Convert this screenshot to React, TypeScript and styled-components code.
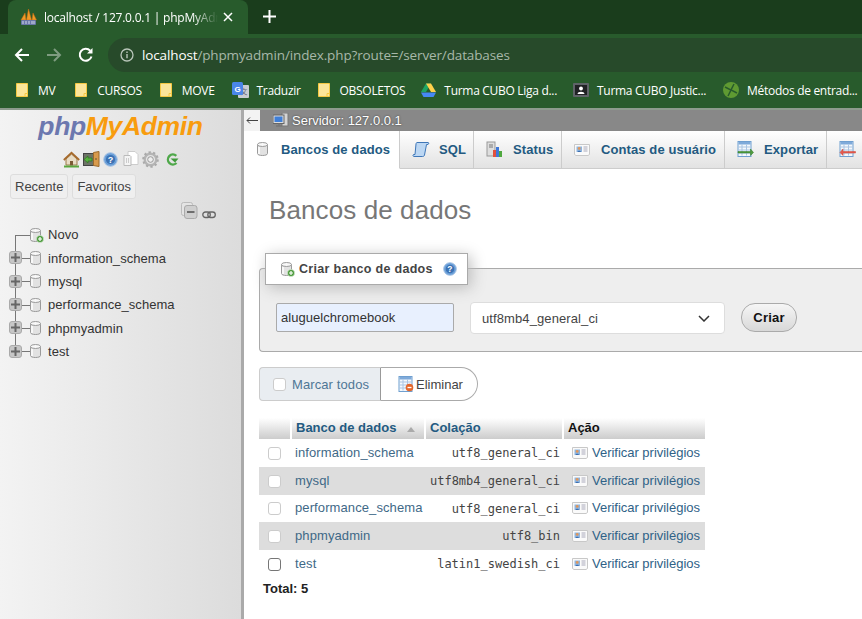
import React from 'react';
import styled, { createGlobalStyle } from 'styled-components';

const Global = createGlobalStyle`
  html, body { margin: 0; padding: 0; background: #fff; }
  body { font-family: "Liberation Sans", Arial, sans-serif; }
  * { box-sizing: border-box; }
`;

const Page = styled.div`
  width: 862px; height: 619px; overflow: hidden; display: flex; flex-direction: column; background: #fff;
`;
const TabStrip = styled.div`
  height: 34px; background: #1a3d1c; display: flex; align-items: flex-end; padding-left: 8px; flex: none;
`;
const BrowserTab = styled.div`
  width: 240px; height: 34px; background: #285b2c; border-radius: 8px 8px 0 0; display: flex; align-items: center; padding: 0 12px;
  color: #fff; font: 12px "Open Sans", sans-serif; position: relative;
`;
const TabTitle = styled.span`
  margin-left: 7px; width: 174px; white-space: nowrap; overflow: hidden; letter-spacing: -0.22px;
  -webkit-mask-image: linear-gradient(90deg, #000 85%, transparent 100%);
  mask-image: linear-gradient(90deg, #000 85%, transparent 100%);
`;
const NewTab = styled.div`
  margin-left: 14px; margin-bottom: 9px; width: 16px; height: 16px; display: flex;
`;
const Toolbar = styled.div`
  height: 38px; flex: none; background: #285b2c; display: flex; align-items: center; padding-left: 14px; padding-top: 4px;
`;
const NavIcons = styled.div`
  display: flex; gap: 16px; align-items: center; width: 94px; flex: none;
`;
const Omnibox = styled.div`
  flex: 1; height: 34px; background: #274a2a; border-radius: 17px 0 0 17px; display: flex; align-items: center; padding-left: 12px;
  font: 13.5px "Open Sans", sans-serif; color: #a8b8a9; letter-spacing: -0.13px;
`;
const Host = styled.span`color: #fff; margin-left: 8px;`;
const Bookmarks = styled.div`
  height: 36px; flex: none; background: #285b2c; display: flex; align-items: center; padding-left: 16px;
  font: 12px "Open Sans", sans-serif; color: #fff; white-space: nowrap;
`;
const Bookmark = styled.div<{ $gap?: number; $after?: number }>`
  display: flex; align-items: center; gap: ${(p) => p.$gap ?? 10}px; letter-spacing: -0.3px; margin-right: ${(p) => p.$after ?? 18}px;
`;
const Divider = styled.div`height: 2px; background: #8d9b8e; flex: none;`;
const Body = styled.div`flex: 1; display: flex; min-height: 0;`;

const Side = styled.aside`
  width: 241px; flex: none; background: linear-gradient(90deg, #f3f3f3, #dcdcdc); padding-top: 1px; color: #333;
`;
const Splitter = styled.div`width: 3px; flex: none; background: #aaa;`;
const Logo = styled.div`
  font: italic bold 26.5px "Liberation Sans", sans-serif; text-align: center; letter-spacing: -0.35px; height: 30px; line-height: 30px;
`;
const Php = styled.span`color: #6c78af;`;
const My = styled.span`color: #f89c0e;`;
const IconRow = styled.div`
  display: flex; align-items: center; margin: 9px 0 0 63px; height: 18px; gap: 3px;
`;
const NavTabs = styled.div`display: flex; gap: 4px; margin: 6px 0 0 10px;`;
const NavTab = styled.div`
  height: 25px; padding: 0 4px; line-height: 24px; font-size: 13px; color: #444; background: #efefef; border: 1px solid #ddd; border-radius: 3px;
`;
const TreeTools = styled.div`
  display: flex; align-items: flex-end; gap: 4px; margin: 3px 0 0 181px; height: 17px;
`;
const Tree = styled.ul`list-style: none; margin: 4px 0 0; padding: 0;`;
const TreeRow = styled.li<{ $first?: boolean; $last?: boolean }>`
  position: relative; height: 23.35px; display: flex; align-items: center; padding-left: 28px; font-size: 13px; color: #333; gap: 4px; letter-spacing: 0.05px;
  &::before {
    content: ""; position: absolute; left: 15px; width: 1px; background: #777;
    top: ${(p) => (p.$first ? '50%' : '0')}; bottom: ${(p) => (p.$last ? '50%' : '0')};
  }
  &::after {
    content: ""; position: absolute; left: 15px; width: 15px; height: 1px; top: 50%; background: #777;
  }
`;
const Expander = styled.span`
  position: absolute; left: 9px; top: 5px; width: 13px; height: 13px; border-radius: 3px; background: #c6c6c6; border: 1px solid #aaa; z-index: 1;
  color: #555; display: flex; align-items: center; justify-content: center;
`;
const Main = styled.main`flex: 1; min-width: 0; display: flex; flex-direction: column; background: #fff;`;
const ServerBar = styled.div`
  height: 21px; flex: none; background: #888; display: flex; align-items: center; color: #fff; font-size: 13px; text-shadow: 0 0 2px #333; letter-spacing: 0; padding-left: 0;
`;
const Collapse = styled.div`
  width: 16px; height: 21px; background: #f3f3f3; color: #333; display: flex; align-items: center; justify-content: center; margin-right: 13px; flex: none; text-shadow: none;
`;
const ServerIcon = styled.span`display: flex; margin-right: 3px;`;
const TopTabs = styled.nav`
  height: 38px; flex: none; display: flex; white-space: nowrap; overflow: hidden;
`;
const TopTab = styled.div<{ $active?: boolean; $w: number; $gap?: number; $pad?: number }>`
  width: ${(p) => p.$w}px; flex: none; display: flex; align-items: center; padding-left: ${(p) => p.$pad ?? 12}px; gap: ${(p) => p.$gap ?? 9}px;
  font: bold 13px "Liberation Sans", sans-serif; color: #235a81; letter-spacing: 0.1px; padding-bottom: 1px;
  border-right: 1px solid #ccc;
  background: ${(p) => (p.$active ? '#fff' : 'linear-gradient(#fff, #e2e2e2)')};
  border-bottom: 1px solid ${(p) => (p.$active ? '#fff' : '#ccc')};
`;
const Content = styled.div`flex: 1; padding: 0 0 0 15px; position: relative; min-height: 0;`;
const Heading = styled.h2`
  font: 400 26px "Liberation Sans", sans-serif; color: #777; margin: 26px 0 0 10px; height: 30px; line-height: 30px; letter-spacing: 0.1px;
`;
const Panel = styled.section`
  margin: 43px -5px 0 0; height: 84px; background: #eee; border: 1px solid #aaa; border-radius: 4px 0 0 4px; position: relative;
  border-right: 0; display: flex; align-items: flex-start; padding: 34px 0 0 16px;
`;
const Legend = styled.div`
  position: absolute; left: 5px; top: -16px; width: 203px; height: 32px; background: #fff; border: 1px solid #aaa; box-shadow: 3px 3px 15px #bbb;
  font: bold 12.5px "Liberation Sans", sans-serif; color: #444; display: flex; align-items: center; padding-left: 13px; gap: 4px; letter-spacing: 0.3px;
`;
const HelpSlot = styled.span`display: flex; margin-left: 6px;`;
const NameInput = styled.div`
  width: 178px; height: 29px; background: #e8f0fe; border: 1px solid #aaa; border-radius: 2px; font-size: 13px; color: #333; line-height: 27px; padding-left: 4px; letter-spacing: 0.05px;
`;
const SelectBox = styled.div`
  width: 255px; height: 32px; margin: -1px 0 0 16px; background: #fff; border: 1px solid #ddd; border-radius: 4px; font-size: 13px; color: #444;
  display: flex; align-items: center; justify-content: space-between; padding: 0 14px 0 11px; letter-spacing: 0.1px;
`;
const CreateButton = styled.button`
  width: 56px; height: 29px; margin-left: 16px; border: 1px solid #aaa; border-radius: 14px; background: linear-gradient(#f6f6f6, #d8d8d8); font: bold 13px "Liberation Sans", sans-serif; color: #111; padding: 0; letter-spacing: 0.2px;
`;
const ActionBar = styled.div`display: flex; margin-top: 15px; height: 34px; font-size: 13px;`;
const CheckAll = styled.div`
  width: 122px; background: #e9edf1; border: 1px solid #ccc; border-right: 1px solid #999; border-radius: 4px 0 0 4px; display: flex; align-items: center; padding-left: 13px; gap: 6px; color: #4f7796; letter-spacing: 0.1px; margin-left: 0;
`;
const DropButton = styled.div`
  width: 97px; background: #fff; border: 1px solid #aaa; border-left: 0; border-radius: 0 17px 17px 0; display: flex; align-items: center; padding-left: 17px; gap: 2px; color: #444;
`;
const Check = styled.span<{ $strong?: boolean }>`
  width: 13px; height: 13px; flex: none; display: block; background: #fff; border-radius: 3px; border: 1px solid ${(p) => (p.$strong ? '#767676' : '#ccc')};
`;
const DbTable = styled.table`
  border-collapse: collapse; table-layout: fixed; width: 446px; margin-top: 17px; font-size: 13px;
`;
const HeadCell = styled.th<{ $w: number; $dark?: boolean }>`
  width: ${(p) => p.$w}px; height: 21px; padding: 0 0 2px 4px; text-align: left; background: linear-gradient(#fff, #ccc); border-left: 2px solid #fff; font-weight: bold; letter-spacing: 0;
  color: ${(p) => (p.$dark ? '#111' : '#235a81')}; white-space: nowrap;
  &:first-child { border-left: 0; }
`;
const SortMark = styled.span`display: inline-block; margin-left: 11px; width: 0; height: 0; border: 4px solid transparent; border-top: 0; border-bottom: 5px solid #aaa; vertical-align: 0;`;
const Row = styled.tr<{ $odd?: boolean; $h: number }>`
  height: ${(p) => p.$h}px; background: ${(p) => (p.$odd ? '#ddd' : '#fff')};
`;
const CheckCell = styled.td`padding: 0 0 0 9px;`;
const NameCell = styled.td`padding: 0 0 2px 4px; color: #3f6987; letter-spacing: 0.1px; white-space: nowrap;`;
const CollationCell = styled.td`padding: 0 3px 0 0; text-align: right; font: 12px "DejaVu Sans Mono", "Liberation Mono", monospace; color: #444; white-space: nowrap;`;
const ActionCell = styled.td`padding: 0 0 2px 9px; color: #2f6287; white-space: nowrap; letter-spacing: -0.02px;`;
const ActionInner = styled.span`display: flex; align-items: center; gap: 4px;`;
const Total = styled.div`font-weight: bold; font-size: 13px; color: #222; margin: 3px 0 0 4px; line-height: 16px;`;

const Db = ({ add, remove }: { add?: boolean; remove?: boolean }) => (
  <svg width="16" height="16" viewBox="0 0 16 16" style={{ flex: 'none' }}>
    <path d="M2.5 3.5v9c0 1.3 2.3 2 5 2s5-.7 5-2v-9z" fill="#e2e2e2" stroke="#9a9a9a" />
    <ellipse cx="7.5" cy="3.5" rx="5" ry="2" fill="#f8f8f8" stroke="#9a9a9a" />
    <path d="M4 6v7" stroke="#fff" strokeWidth="1.5" />
    {add && <circle cx="12" cy="12" r="3.6" fill="#4c9a3c" stroke="#dfeedd" strokeWidth=".6" />}
    {add && <path d="M10 12h4M12 10v4" stroke="#fff" strokeWidth="1.2" />}
    {remove && <circle cx="12" cy="12" r="3.6" fill="#d8592a" />}
  </svg>
);
const Home = () => (
  <svg width="17" height="17" viewBox="0 0 17 17">
    <path d="M3 8v6h11V8L8.500 3z" fill="#e8dcc5" stroke="#9b7a4a" />
    <path d="M.8 9 8.500 1.800 16.200 9" fill="none" stroke="#a66a2c" strokeWidth="1.800" />
    <rect x="7" y="10" width="3" height="4.500" fill="#7b5a35" />
    <path d="M1 15.500h15" stroke="#5aa63e" strokeWidth="2" />
  </svg>
);
const ExitIcon = () => (
  <svg width="17" height="16" viewBox="0 0 17 16">
    <rect x=".5" y="2.500" width="10" height="12" fill="#6d7467" stroke="#444" />
    <path d="M10.500 1.500 16 .500v15l-5.500-1z" fill="#d89a4c" stroke="#9a6a2c" />
    <path d="M1 8.500 5 5v2h4v3H5v2z" fill="#57b03f" stroke="#2f7a20" strokeWidth=".7" />
    <rect x="12.500" y="7" width="1" height="2" fill="#653" />
  </svg>
);
const Help = ({ size = 15 }: { size?: number }) => (
  <svg width={size} height={size} viewBox="0 0 15 15">
    <circle cx="7.500" cy="7.500" r="6.800" fill="#6a9fd8" stroke="#a9c4e4" />
    <circle cx="7.500" cy="7.500" r="4.600" fill="#3c72b4" />
    <text x="7.500" y="10.600" textAnchor="middle" fontSize="9" fontWeight="bold" fill="#fff" fontFamily="Liberation Sans">?</text>
  </svg>
);
const Docs = () => (
  <svg width="16" height="16" viewBox="0 0 16 16" style={{ marginLeft: 2 }}>
    <path d="M5 .500h7l3 3v10H5z" fill="#fff" stroke="#ccc" />
    <path d="M1 4.500h6l1 1v9H1z" fill="#f4f4f4" stroke="#bbb" />
    <path d="M3.500 7v5M5.500 7v5" stroke="#ccc" />
  </svg>
);
const Gear = () => (
  <svg width="17" height="17" viewBox="0 0 17 17">
    <circle cx="8.500" cy="8.500" r="5.800" fill="none" stroke="#b5b5b5" strokeWidth="2.400" />
    <circle cx="8.500" cy="8.500" r="7.300" fill="none" stroke="#aaa" strokeWidth="2" strokeDasharray="2.300 2.300" />
    <circle cx="8.500" cy="8.500" r="2.800" fill="#eee" stroke="#999" />
  </svg>
);
const Reload = () => (
  <svg width="14" height="15" viewBox="0 0 14 15" style={{ marginLeft: 3 }}>
    <path d="M11.300 3.800A5 5 0 1 0 11.500 11" fill="none" stroke="#4fa84a" strokeWidth="2.400" />
    <path d="M5.500 6.500h8L10 10.500z" fill="#3f9a3b" />
  </svg>
);
const CollapseAll = () => (
  <svg width="17" height="17" viewBox="0 0 17 17">
    <rect x=".5" y=".5" width="11" height="13" rx="2" fill="#e4e4e4" stroke="#bbb" />
    <rect x="3.500" y="3.500" width="12.500" height="13" rx="2.500" fill="#cfcfcf" stroke="#aaa" />
    <path d="M6 10h7.500" stroke="#555" strokeWidth="1.600" />
  </svg>
);
const LinkIcon = () => (
  <svg width="14" height="8" viewBox="0 0 14 8">
    <rect x=".8" y="1" width="7.500" height="5.500" rx="2.700" fill="none" stroke="#666" strokeWidth="1.300" />
    <rect x="5.800" y="1" width="7.500" height="5.500" rx="2.700" fill="none" stroke="#666" strokeWidth="1.300" />
  </svg>
);
const SqlIcon = () => (
  <svg width="18" height="17" viewBox="0 0 18 17" style={{ flex: 'none' }}>
    <path d="M5 1.500h11c1 0 1 1.500 0 2h-1.500L12.500 14c-.3 1.200-1 1.500-2 1.500H2c-1 0-1.500-1.500-.5-2h1.500L4 3c.2-1 .5-1.500 1-1.500z" fill="#bcd7f3" stroke="#3f77b8" />
  </svg>
);
const StatusIcon = () => (
  <svg width="16" height="17" viewBox="0 0 16 17" style={{ flex: 'none' }}>
    <rect x="1" y="1" width="8" height="14" fill="#dedede" stroke="#999" />
    <path d="M3 4h4M3 6h4" stroke="#777" />
    <rect x="7" y="9" width="3" height="7" fill="#e2513f" />
    <rect x="10" y="6" width="3" height="10" fill="#3f78d8" />
    <rect x="13" y="10" width="3" height="6" fill="#4fa83f" />
  </svg>
);
const UserCard = () => (
  <svg width="16" height="13" viewBox="0 0 16 13" style={{ flex: 'none' }}>
    <path d="M.5 1.500h15v10l-1.500 1H2l-1.500-1z" fill="#fafafa" stroke="#c8c8c8" />
    <rect x="2.500" y="3.500" width="5.500" height="5.500" fill="#8fb5de" />
    <circle cx="5.200" cy="5.400" r="1.400" fill="#e0965a" />
    <path d="M3.500 9c.3-1.600 3.100-1.600 3.500 0z" fill="#3d6fb0" />
    <path d="M9.500 4h4M9.500 6h4M9.500 8h4" stroke="#aab" />
  </svg>
);
const SheetBase = () => (
  <>
    <rect x="1" y=".5" width="13" height="15" fill="#f4f8fc" stroke="#6f9fd0" />
    <rect x="1.500" y="1" width="12" height="2.500" fill="#7faada" />
    <path d="M1.500 6h12M1.500 9h12M1.500 12h12M5 3.500v11M9.500 3.500v11" stroke="#aac4e2" />
  </>
);
const ExportIcon = () => (
  <svg width="17" height="16" viewBox="0 0 17 16" style={{ flex: 'none' }}>
    <SheetBase />
    <path d="M1 10.500h12.500V8l3 3.500-3 3V12H1z" fill="#4f9a3f" stroke="#2f7a20" strokeWidth=".5" />
  </svg>
);
const ImportIcon = () => (
  <svg width="17" height="16" viewBox="0 0 17 16" style={{ flex: 'none' }}>
    <SheetBase />
    <path d="M16.500 10.500H4V8l-3 3.500 3 3V12h12.500z" fill="#e65a50" stroke="#c43" strokeWidth=".5" />
  </svg>
);
const DeleteIcon = () => (
  <svg width="16" height="16" viewBox="0 0 16 16" style={{ flex: 'none' }}>
    <SheetBase />
    <circle cx="11.500" cy="11.500" r="3.800" fill="#e4672b" />
    <path d="M9.500 11.500h4" stroke="#fff" strokeWidth="1.300" />
  </svg>
);
const Folder = () => (
  <svg width="12" height="14" viewBox="0 0 12 14" style={{ flex: 'none' }}>
    <path d="M.5.500h8.500l2.500 0v13H.5z" fill="#fbe59a" stroke="#f5c842" />
    <path d="M9 13.500v-3h2.500" fill="none" stroke="#f5c842" />
  </svg>
);
const Translate = () => (
  <svg width="17" height="16" viewBox="0 0 17 16" style={{ flex: 'none' }}>
    <rect x="6" y="3" width="11" height="13" rx="1" fill="#c9ccd2" />
    <text x="11.500" y="12" fontSize="7" textAnchor="middle" fill="#667" fontFamily="Noto Sans CJK SC">文</text>
    <rect x="0" y="0" width="11" height="13" rx="1.500" fill="#4a86e8" />
    <text x="5.500" y="9.500" fontSize="8" fontWeight="bold" textAnchor="middle" fill="#fff" fontFamily="Liberation Sans">G</text>
  </svg>
);
const Drive = () => (
  <svg width="15" height="14" viewBox="0 0 15 14" style={{ flex: 'none' }}>
    <path d="M5 .5h5l-5 8.500H0z" fill="#1fa463" />
    <path d="M5 .500h5l5 8.500h-5z" fill="#ffd04b" />
    <path d="M0 9.500h15L12.500 14h-10z" fill="#4688f4" />
  </svg>
);
const Classroom = () => (
  <svg width="16" height="14" viewBox="0 0 16 14" style={{ flex: 'none' }}>
    <rect x="0" y="0" width="16" height="14" rx="1" fill="#5f6368" />
    <rect x="2" y="2" width="12" height="10" fill="#202124" />
    <circle cx="8" cy="5.500" r="1.900" fill="#fff" />
    <path d="M4.500 11c.2-3 6.800-3 7 0z" fill="#fff" />
  </svg>
);
const Methods = () => (
  <svg width="16" height="16" viewBox="0 0 16 16" style={{ flex: 'none' }}>
    <circle cx="8" cy="8" r="8" fill="#5f9a32" />
    <path d="M2 5 8 8 5 14M11 2 8 8l6 3" fill="none" stroke="#285b2c" strokeWidth="1.500" />
  </svg>
);
const Favicon = () => (
  <svg width="17" height="17" viewBox="0 0 17 17" style={{ flex: 'none' }}>
    <path d="M1 11 5 4l1 7zM6.500 11 8.500 0l3 11zM12 11l1-7 3.500 7z" fill="#ef9a28" stroke="#c96b10" strokeWidth=".5" />
    <rect x="1" y="11" width="15" height="5" rx="1" fill="#6a78a8" />
    <path d="M3 12v3M6 12v3M9 12v3M12 12v3M14 12v3" stroke="#dfe3f0" strokeWidth=".9" />
  </svg>
);
const ServerPc = () => (
  <svg width="16" height="15" viewBox="0 0 16 15">
    <rect x="9" y="0" width="6" height="13" fill="#d4d4d4" stroke="#777" />
    <rect x="0" y="2" width="11" height="8.500" fill="#dcdcdc" stroke="#666" />
    <rect x="1.500" y="3.500" width="8" height="5.500" fill="#3f7fd8" />
    <path d="M3 13h6M6 10.500V13" stroke="#777" strokeWidth="1.500" />
  </svg>
);

const databases = [
  ['information_schema', 'utf8_general_ci', 28],
  ['mysql', 'utf8mb4_general_ci', 28],
  ['performance_schema', 'utf8_general_ci', 27],
  ['phpmyadmin', 'utf8_bin', 28],
  ['test', 'latin1_swedish_ci', 28],
] as const;

export default function App() {
  return (
    <Page>
      <Global />
      <TabStrip>
        <BrowserTab>
          <Favicon />
          <TabTitle>localhost / 127.0.0.1 | phpMyAdmin</TabTitle>
          <svg width="10" height="10" viewBox="0 0 10 10" style={{ marginLeft: 5, flex: 'none' }}>
            <path d="M1 1l8 8M9 1l-8 8" stroke="#fff" strokeWidth="1.500" />
          </svg>
        </BrowserTab>
        <NewTab>
          <svg width="13" height="13" viewBox="0 0 13 13" style={{ margin: '1px 0 0 1px' }}>
            <path d="M6.500 0v13M0 6.500h13" stroke="#fff" strokeWidth="2" />
          </svg>
        </NewTab>
      </TabStrip>
      <Toolbar>
        <NavIcons>
          <svg width="16" height="16" viewBox="0 0 16 16"><path d="M15 8H2M8 2 2 8l6 6" fill="none" stroke="#fff" strokeWidth="2" /></svg>
          <svg width="16" height="16" viewBox="0 0 16 16"><path d="M1 8h13M8 2l6 6-6 6" fill="none" stroke="#7f9c81" strokeWidth="2" /></svg>
          <svg width="16" height="16" viewBox="0 0 16 16"><path d="M13.500 9.500A6 6 0 1 1 12.200 3.700" fill="none" stroke="#fff" strokeWidth="2" /><path d="M14.500 1v5.500H9z" fill="#fff" /></svg>
        </NavIcons>
        <Omnibox>
          <svg width="14" height="14" viewBox="0 0 14 14" style={{ flex: 'none' }}>
            <circle cx="7" cy="7" r="6" fill="none" stroke="#b9c6ba" strokeWidth="1.300" />
            <path d="M7 6v4.300M7 3.500v1.500" stroke="#b9c6ba" strokeWidth="1.400" />
          </svg>
          <Host>localhost</Host>/phpmyadmin/index.php?route=/server/databases
        </Omnibox>
      </Toolbar>
      <Bookmarks>
        <Bookmark $after={20}><Folder />MV</Bookmark>
        <Bookmark $after={18}><Folder />CURSOS</Bookmark>
        <Bookmark $after={17}><Folder />MOVE</Bookmark>
        <Bookmark $gap={8} $after={17}><Translate />Traduzir</Bookmark>
        <Bookmark $after={16}><Folder />OBSOLETOS</Bookmark>
        <Bookmark $gap={8} $after={16}><Drive />Turma CUBO Liga d...</Bookmark>
        <Bookmark $gap={8} $after={17}><Classroom />Turma CUBO Justic...</Bookmark>
        <Bookmark $gap={8} $after={0}><Methods />Métodos de entrad...</Bookmark>
      </Bookmarks>
      <Divider />
      <Body>
        <Side>
          <Logo><Php>php</Php><My>MyAdmin</My></Logo>
          <IconRow><Home /><ExitIcon /><Help /><Docs /><Gear /><Reload /></IconRow>
          <NavTabs><NavTab>Recente</NavTab><NavTab>Favoritos</NavTab></NavTabs>
          <TreeTools><CollapseAll /><LinkIcon /></TreeTools>
          <Tree>
            <TreeRow $first><Db add />Novo</TreeRow>
            {databases.map(([name], i) => (
              <TreeRow key={name} $last={i === databases.length - 1}>
                <Expander>
                  <svg width="9" height="9" viewBox="0 0 9 9"><path d="M0 4.500h9M4.500 0v9" stroke="#666" strokeWidth="2" /></svg>
                </Expander>
                <Db />{name}
              </TreeRow>
            ))}
          </Tree>
        </Side>
        <Splitter />
        <Main>
          <ServerBar>
            <Collapse>
              <svg width="12" height="7" viewBox="0 0 12 7"><path d="M12 3.500H1M4 .5l-3 3 3 3" fill="none" stroke="#444" /></svg>
            </Collapse>
            <ServerIcon><ServerPc /></ServerIcon>
            Servidor: 127.0.0.1
          </ServerBar>
          <TopTabs>
            <TopTab $active $w={156} $gap={10} $pad={11}><Db />Bancos de dados</TopTab>
            <TopTab $w={74}><SqlIcon />SQL</TopTab>
            <TopTab $w={88} $gap={11}><StatusIcon />Status</TopTab>
            <TopTab $w={163} $gap={11}><UserCard />Contas de usuário</TopTab>
            <TopTab $w={102} $gap={10}><ExportIcon /><span>Exportar</span></TopTab>
            <TopTab $w={40}><ImportIcon /></TopTab>
          </TopTabs>
          <Content>
            <Heading>Bancos de dados</Heading>
            <Panel>
              <Legend><Db add />Criar banco de dados<HelpSlot><Help size={14} /></HelpSlot></Legend>
              <NameInput>aluguelchromebook</NameInput>
              <SelectBox>
                utf8mb4_general_ci
                <svg width="12" height="7" viewBox="0 0 12 7"><path d="M1 1l5 5 5-5" fill="none" stroke="#333" strokeWidth="1.500" /></svg>
              </SelectBox>
              <CreateButton>Criar</CreateButton>
            </Panel>
            <ActionBar>
              <CheckAll><Check />Marcar todos</CheckAll>
              <DropButton><DeleteIcon />Eliminar</DropButton>
            </ActionBar>
            <DbTable>
              <thead>
                <tr>
                  <HeadCell $w={32} />
                  <HeadCell $w={134}>Banco de dados<SortMark /></HeadCell>
                  <HeadCell $w={138}>Colação</HeadCell>
                  <HeadCell $w={142} $dark>Ação</HeadCell>
                </tr>
              </thead>
              <tbody>
                {databases.map(([name, collation, h], i) => (
                  <Row key={name} $odd={i % 2 === 1} $h={h}>
                    <CheckCell><Check $strong={name === 'test'} /></CheckCell>
                    <NameCell>{name}</NameCell>
                    <CollationCell>{collation}</CollationCell>
                    <ActionCell><ActionInner><UserCard />Verificar privilégios</ActionInner></ActionCell>
                  </Row>
                ))}
              </tbody>
            </DbTable>
            <Total>Total: 5</Total>
          </Content>
        </Main>
      </Body>
    </Page>
  );
}
